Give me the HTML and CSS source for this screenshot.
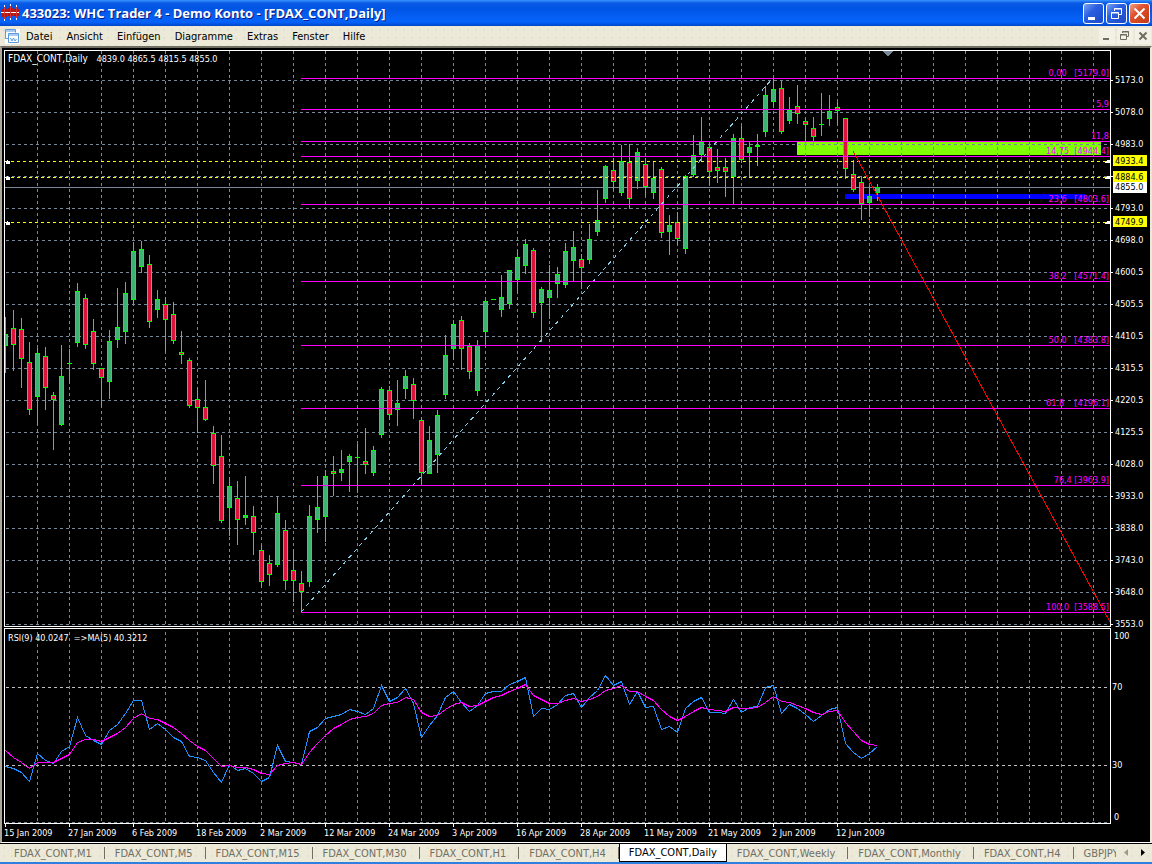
FILE: index.html
```html
<!DOCTYPE html>
<html lang="de">
<head>
    <meta charset="UTF-8">
    <meta name="viewport" content="width=device-width, initial-scale=1.0">
    <title>WHC Trader 4</title>
    <link rel="stylesheet" href="styles.css">
</head>
<body>
    <header class="titlebar">
        <svg class="app-icon" width="18" height="18" viewBox="0 0 18 18">
            <path d="M3.5 1V17M9.5 0V16M15.5 1V16" stroke="#fff" stroke-width="1"/>
            <path d="M1 5h5v8H1zM7 4h5v8H7zM13 5h5v7h-5z" fill="#b01818"/>
            <path d="M0 8.500H18" stroke="#fff" stroke-width="1"/>
            <path d="M3.500 3v12M9.500 2v12M15.500 3v11" stroke="#d83030"/>
        </svg>
        <h1>433023: WHC Trader 4 - Demo Konto - [FDAX_CONT,Daily]</h1>
        <div class="window-buttons">
            <button type="button" aria-label="Minimieren">
                <svg width="19" height="19"><path d="M4 13h7v3H4z" fill="#fff"/></svg>
            </button>
            <button type="button" aria-label="Wiederherstellen">
                <svg width="19" height="19" fill="none" stroke="#fff"><path d="M7.500 7V4.500h7v6H12M7 5h8"/><path d="M4.500 8.500h7v6h-7zM4 9h8"/></svg>
            </button>
            <button type="button" class="close" aria-label="Schließen">
                <svg width="19" height="19"><path d="M4.500 4.500l10 10M14.500 4.500l-10 10" stroke="#fff" stroke-width="2"/></svg>
            </button>
        </div>
    </header>

    <nav class="menubar">
        <svg class="doc-icon" width="15" height="15" viewBox="0 0 15 15" fill="none" stroke="#5a9be0">
            <path d="M3.500 9.500h-3v-9h10v3M1 2h9"/>
            <path d="M3.500 4.500h10v9h-10zM4 6h9" fill="#fff"/>
            <path d="M5.500 9l1.500 3 1.500-3 1.500 3 1.500-2"/>
        </svg>
        <a href="#datei">Datei</a>
        <a href="#ansicht">Ansicht</a>
        <a href="#einfuegen">Einfügen</a>
        <a href="#diagramme">Diagramme</a>
        <a href="#extras">Extras</a>
        <a href="#fenster">Fenster</a>
        <a href="#hilfe">Hilfe</a>
        <div class="doc-buttons">
            <button type="button" aria-label="Diagramm minimieren">
                <svg width="16" height="16"><path d="M4 10h6v2H4z" fill="#6f6d60"/></svg>
            </button>
            <button type="button" aria-label="Diagramm wiederherstellen">
                <svg width="16" height="16" fill="none" stroke="#6f6d60"><path d="M5.500 5V3.500h6v5H10M5 4h7"/><path d="M3.500 6.500h6v5h-6zM3 7h7"/></svg>
            </button>
            <button type="button" aria-label="Diagramm schließen">
                <svg width="16" height="16"><path d="M4.500 4.500l7 7M11.500 4.500l-7 7" stroke="#6f6d60" stroke-width="2"/></svg>
            </button>
        </div>
    </nav>

    <main class="chart-window">
        <div class="pane">
            <svg class="plot" id="pricePlot" height="575"></svg>
            <svg class="axis" id="priceAxis" width="39" height="577"></svg>
        </div>
        <div class="pane">
            <svg class="plot" id="rsiPlot" height="194"></svg>
            <svg class="axis" id="rsiAxis" width="39" height="196"></svg>
        </div>
        <div class="time-axis">
            <span>15 Jan 2009</span>
            <span>27 Jan 2009</span>
            <span>6 Feb 2009</span>
            <span>18 Feb 2009</span>
            <span>2 Mar 2009</span>
            <span>12 Mar 2009</span>
            <span>24 Mar 2009</span>
            <span>3 Apr 2009</span>
            <span>16 Apr 2009</span>
            <span>28 Apr 2009</span>
            <span>11 May 2009</span>
            <span>21 May 2009</span>
            <span>2 Jun 2009</span>
            <span>12 Jun 2009</span>
        </div>
    </main>

    <footer class="tabbar">
        <div class="tabs">
            <button type="button">FDAX_CONT,M1</button>
            <button type="button">FDAX_CONT,M5</button>
            <button type="button">FDAX_CONT,M15</button>
            <button type="button">FDAX_CONT,M30</button>
            <button type="button">FDAX_CONT,H1</button>
            <button type="button">FDAX_CONT,H4</button>
            <button type="button" class="active">FDAX_CONT,Daily</button>
            <button type="button">FDAX_CONT,Weekly</button>
            <button type="button">FDAX_CONT,Monthly</button>
            <button type="button">FDAX_CONT,H4</button>
            <button type="button">GBPJPY</button>
        </div>
        <div class="tab-scroll">
            <button type="button" aria-label="Zurück"><svg width="5" height="8"><path d="M4 0v7L0 3.500z" fill="#9c9a8c"/></svg></button>
            <button type="button" aria-label="Weiter"><svg width="5" height="8"><path d="M0 0v7l4-3.500z" fill="#000"/></svg></button>
        </div>
    </footer>

    <script src="chart.js"></script>
</body>
</html>
```
FILE: styles.css
```css
body {
    margin: 0;
    min-height: 100vh;
    display: flex;
    flex-direction: column;
    box-sizing: border-box;
    border-bottom: 2px solid #2f7fe0;
    background-color: #ece9d8;
    font-family: "DejaVu Sans Condensed", "DejaVu Sans", sans-serif;
    font-stretch: condensed;
    font-size: 11px;
    color: #000;
    overflow-x: hidden;
}

button {
    font: inherit;
    padding: 0;
    margin: 0;
    border: none;
    background: none;
}

svg {
    display: block;
}

/* Title bar */
.titlebar {
    height: 26px;
    display: flex;
    align-items: center;
    padding: 0 2px 0 1px;
    background: linear-gradient(#3a93ff 0, #0a5be4 3px, #0054e3 8px, #0560f5 18px, #0463fb 22px, #0046c8 26px);
}

.titlebar h1 {
    margin: 0 0 0 3px;
    flex: 1;
    font-family: "Open Sans", sans-serif;
    font-stretch: normal;
    font-size: 13px;
    font-weight: bold;
    color: #fff;
    text-shadow: 1px 1px 0 #0a1883;
    white-space: nowrap;
}

.window-buttons {
    display: flex;
    gap: 2px;
}

.window-buttons button {
    width: 21px;
    height: 21px;
    box-sizing: border-box;
    border: 1px solid #fff;
    border-radius: 3px;
    background: linear-gradient(135deg, #7ba4f4, #2a5ee0 40%, #1c49c8);
}

.window-buttons .close {
    background: linear-gradient(135deg, #f0a088, #e0502c 40%, #c03a14);
}

/* Menu */
.menubar {
    height: 20px;
    display: flex;
    align-items: center;
    padding: 0 1px 0 5px;
    background: radial-gradient(circle, #dfe3cd 1px, transparent 1px) 0 0 / 8px 8px, #ece9d8;
}

.doc-icon {
    background-color: #fff;
    margin-right: 6px;
}

.menubar a {
    color: #000;
    text-decoration: none;
    margin-right: 14px;
}

.doc-buttons {
    display: flex;
    gap: 2px;
    margin-left: auto;
}

.doc-buttons button {
    width: 16px;
    height: 16px;
    background-color: #f3f1e6;
}

/* Chart window */
.chart-window {
    flex: 1;
    box-sizing: border-box;
    padding: 2px 0 0 2px;
    background-color: #000;
    border-style: solid;
    border-width: 2px 2px 1px;
    border-color: #716f64 #ece9d8 #fff #aca899;
}

.pane {
    display: flex;
    margin-bottom: 1px;
}

.plot {
    flex: 1;
    min-width: 0;
    border: 1px solid #fff;
}

.axis {
    overflow: visible;
}

.time-axis {
    display: flex;
    overflow: hidden;
    margin-top: -1px;
    height: 17px;
    line-height: 18px;
    font-size: 9px;
    color: #fff;
}

.time-axis span {
    flex: 0 0 64px;
    white-space: nowrap;
    background: linear-gradient(#fff, #fff) 1px 0 / 1px 3px no-repeat;
}

svg text {
    font-size: 9px;
    white-space: pre;
    fill: #fff;
}

svg .symbol {
    font-size: 10px;
}

.grid-v, .grid-h {
    stroke: #778899;
    stroke-dasharray: 3 3;
}

.bid {
    stroke: #778899;
}

.level {
    stroke: #c0c0c0;
    stroke-dasharray: 3 3;
}

.order {
    stroke: #ffff00;
    stroke-dasharray: 3 3;
}

.fib {
    stroke: #ff00ff;
}

svg .fib-label {
    fill: #ff00ff;
    text-anchor: end;
}

.wick {
    stroke: #00ff00;
}

.up {
    fill: #3cb371;
    stroke: #00ff00;
}

.down {
    fill: #dc143c;
    stroke: #00ff00;
}

.zone-green {
    fill: #7fff00;
}

.zone-blue {
    fill: #0000ff;
}

.trend {
    stroke: #87ceeb;
    stroke-dasharray: 4 4;
}

.target {
    stroke: #ff0000;
}

.rsi, .rsi-ma {
    fill: none;
    stroke: #1e90ff;
}

.rsi-ma {
    stroke: #ff00ff;
}

.tick {
    stroke: #fff;
}

.box-yellow {
    fill: #ffff00;
}

.box-white {
    fill: #fff;
}

svg .box-text {
    fill: #000;
}

/* Tabs */
.tabbar {
    height: 19px;
    display: flex;
    box-sizing: border-box;
    border-top: 1px solid #000;
    background: radial-gradient(circle, #dfe3cd 1px, transparent 1px) 0 0 / 8px 8px, #ece9d8;
}

.tabs {
    flex: 1;
    min-width: 0;
    display: flex;
    overflow: hidden;
    padding-left: 4px;
}

.tabs button {
    flex: none;
    padding: 0 13px 0 10px;
    color: #716f64;
    white-space: nowrap;
    background: linear-gradient(#716f64, #716f64) 100% 3px / 1px 12px no-repeat;
}

.tabs .active {
    color: #000;
    background: #fff;
    border: 1px solid #000;
    border-top: none;
    padding: 0 9px;
}

.tabs button:last-child {
    background: none;
}

.tab-scroll {
    display: flex;
    align-items: center;
    gap: 12px;
    padding: 0 6px 0 8px;
}
```
FILE: chart.js
```js
const BAR = 8;          // pixels per bar
const PRICE_TOP = 51;   // chart y of the first pixel row in each pane
const RSI_TOP = 629;

// high, body top, body bottom, low, up (1) or down (0)
const candles = [
    [317,334,346,373,1], [310,328,345,371,0], [318,329,359,388,0], [342,362,410,415,0], [348,353,397,425,1],
    [347,356,388,410,0], [392,395,400,450,0], [345,376,425,426,1], [349,363,364,384,1], [283,291,343,347,1],
    [294,298,345,349,0], [319,331,364,370,0], [368,368,378,407,0], [330,341,382,399,1], [288,327,340,348,1],
    [282,293,332,344,1], [242,251,300,304,1], [241,249,267,273,1], [255,264,322,328,0], [290,299,310,318,1],
    [297,304,320,352,0], [302,314,341,344,0], [331,352,355,364,0], [358,360,406,408,0], [387,399,408,433,0],
    [380,407,420,421,0], [426,433,466,484,0], [435,456,521,523,0], [477,486,508,536,1], [481,498,520,545,0],
    [476,515,518,525,1], [506,516,533,555,0], [545,550,582,587,0], [555,563,575,586,0], [496,513,565,567,1],
    [520,530,581,590,0], [550,570,581,602,0], [571,583,592,612,0], [505,516,582,587,1], [476,507,520,533,1],
    [470,476,517,542,1], [456,471,474,496,0], [450,469,473,481,1], [454,456,462,492,1], [444,457,458,493,1],
    [428,461,465,474,0], [446,450,473,476,1], [387,389,435,438,1], [386,390,415,420,0], [380,403,410,426,1],
    [370,376,389,399,1], [378,384,401,419,0], [417,420,473,485,0], [426,440,474,474,1], [410,415,455,473,1],
    [335,355,395,399,1], [320,324,349,360,1], [316,320,349,370,0], [343,346,372,379,0], [340,345,391,396,1],
    [300,301,332,345,1], [299,299,300,300,1], [275,297,310,317,1], [270,270,304,309,1], [250,257,280,294,1],
    [239,244,266,274,1], [248,250,313,318,0], [287,289,303,342,1], [265,290,298,319,1], [267,274,284,298,1],
    [243,251,285,288,1], [231,247,261,281,1], [254,259,268,289,0], [224,239,260,264,1], [190,220,232,236,1],
    [165,166,199,203,1], [158,170,182,190,0], [145,161,193,196,1], [144,162,199,209,0], [148,152,181,189,1],
    [158,164,187,196,0], [161,178,193,199,1], [167,169,233,238,0], [215,225,232,255,1], [212,222,239,245,0],
    [175,176,249,254,1], [135,155,175,177,1], [117,142,155,162,1], [141,147,172,185,0], [149,167,171,183,0],
    [158,167,172,197,0], [134,138,177,204,1], [126,138,160,163,0], [142,147,153,177,1], [134,145,147,166,1],
    [86,95,132,137,1], [78,89,102,107,1], [81,88,132,134,0], [97,110,121,124,1], [85,106,114,124,0],
    [118,121,125,150,0], [117,128,137,146,0], [93,124,125,136,1], [95,111,119,126,1], [102,107,111,125,0],
    [118,118,169,179,0], [160,174,190,192,0], [176,182,204,220,0], [186,196,203,217,1], [184,187,193,201,1]
];

const rsi = [
    766,768,772,781,753,760,763,751,746,717,735,740,744,730,724,713,700,700,729,723,729,737,741,756,757,760,
    772,782,764,770,768,773,781,777,745,761,762,764,731,727,718,716,714,709,711,714,708,685,701,697,688,703,
    737,725,715,697,691,702,711,705,693,691,691,684,681,677,716,708,709,704,695,693,707,697,690,675,685,681,
    704,691,707,706,729,726,732,708,701,697,712,712,713,699,712,707,706,687,685,713,704,708,714,721,715,709,
    707,743,752,758,753,746
];

const rsiMa = [
    750,757,762,768,762,762,762,758,754,742,739,739,741,737,733,727,718,713,718,719,723,727,733,740,746,750,
    758,766,765,767,767,769,773,774,765,763,762,764,752,743,735,728,724,719,717,716,713,705,703,702,697,699,
    712,716,715,709,704,702,706,705,701,697,695,691,688,684,695,699,703,703,700,698,701,699,696,690,688,685,
    691,691,696,700,709,716,720,716,711,707,709,710,711,707,708,708,707,702,696,701,702,705,708,712,714,711,
    710,722,731,740,744,745
];

const fibs = [
    [78, "0,00   [5179.0]"], [109, "5,9"], [141, "11,8"], [156, "14,75  [4944.4]"], [204, "23,6   [4803.6]"],
    [281, "38.2   [4571.4]"], [345, "50.0   [4383.8]"], [408, "61.8    [4196.1]"], [485, "76,4 [3963.9]"], [612, "100.0  [3588.5]"]
];

const prices = ["5173.0", "5078.0", "4983.0", "4888.0", "4793.0", "4698.0", "4600.5", "4505.5", "4410.5",
    "4315.5", "4220.5", "4125.5", "4028.0", "3933.0", "3838.0", "3743.0", "3648.0", "3553.0"];

const orders = [[161, "4933.4"], [177, "4884.6"], [222, "4749.9"]];

function el(parent, name, attrs, text) {
    const node = document.createElementNS("http://www.w3.org/2000/svg", name);
    for (const key in attrs) node.setAttribute(key, attrs[key]);
    if (text) node.textContent = text;
    parent.appendChild(node);
    return node;
}

function hline(parent, cls, y, x1) {
    el(parent, "line", { class: cls, x1: x1 || 0, x2: "100%", y1: y + 0.5, y2: y + 0.5 });
}

// vertical grid, enough columns for wide windows
function columns(parent, y1, y2) {
    for (let x = 32; x < 4000; x += 32) {
        el(parent, "line", { class: "grid-v", x1: x + 0.5, x2: x + 0.5, y1: y1, y2: y2 });
    }
}

function drawPrice() {
    const svg = document.getElementById("pricePlot");
    const g = el(svg, "g", { transform: "translate(0 " + -PRICE_TOP + ")", "shape-rendering": "crispEdges" });

    el(g, "rect", { class: "zone-green", x: 792, y: 142, width: 304, height: 13 });
    el(g, "rect", { class: "zone-blue", x: 840, y: 194, width: 240, height: 5 });
    columns(g, 51, 626);
    prices.forEach((p, i) => hline(g, "grid-h", 80 + i * 32, 1));
    hline(g, "bid", 187);

    candles.forEach(([high, top, bottom, low, up], i) => {
        const x = i * BAR;
        if (low - high > 1) {
            el(g, "line", { class: "wick", x1: x + 0.5, x2: x + 0.5, y1: high, y2: low });
        }
        if (bottom - top < 2) {
            el(g, "line", { class: "wick", x1: x - 2, x2: x + 3, y1: top + 0.5, y2: top + 0.5 });
        } else {
            el(g, "rect", { class: up ? "up" : "down", x: x - 1.5, y: top + 0.5, width: 4, height: bottom - top - 1 });
        }
    });

    el(g, "line", { class: "trend", x1: 296, y1: 612, x2: 768, y2: 78 });
    fibs.forEach(([y]) => hline(g, "fib", y, 296));
    fibs.forEach(([y, label]) => el(g, "text", { class: "fib-label", x: "100%", y: y - 2, dx: -1 }, label));
    orders.forEach(([y]) => hline(g, "order", y));
    el(g, "line", { class: "target", x1: 848, y1: 151, x2: 1105, y2: 622 });
    el(g, "path", { d: "M877 51h11l-5 5h-1z", fill: "#778899" });

    // order arrows on both edges
    orders.forEach(([y]) => {
        el(g, "path", { d: "M0 " + (y + 0.5) + "l3-2v1h2v3H1z", fill: "#fff" });
        const right = el(g, "svg", { x: "100%", y: y - 2, width: 6, height: 5, overflow: "visible" });
        el(right, "path", { d: "M-5 4v-1l3-3v1h2v3z", fill: "#fff" });
    });

    const title = el(g, "text", { x: 3, y: 62 });
    el(title, "tspan", { class: "symbol" }, "FDAX_CONT,Daily   ");
    el(title, "tspan", {}, "4839.0 4865.5 4815.5 4855.0");
}

function drawPriceAxis() {
    const g = el(document.getElementById("priceAxis"), "g", { transform: "translate(0 -50)" });
    prices.forEach((p, i) => {
        const y = 80 + i * 32;
        el(g, "line", { class: "tick", x1: 0, x2: 2, y1: y + 0.5, y2: y + 0.5 });
        if (p !== "4888.0") el(g, "text", { x: 4, y: y + 3 }, p);
    });
    el(g, "rect", { class: "box-white", x: 2, y: 182, width: 34, height: 11 });
    el(g, "text", { class: "box-text", x: 4, y: 190 }, "4855.0");
    orders.forEach(([y, label]) => {
        el(g, "rect", { class: "box-yellow", x: 2, y: y - 6, width: 34, height: 11 });
        el(g, "text", { class: "box-text", x: 4, y: y + 3 }, label);
    });
}

function drawRsi() {
    const g = el(document.getElementById("rsiPlot"), "g", { transform: "translate(0 " + -RSI_TOP + ")", "shape-rendering": "crispEdges" });
    const points = values => values.map((y, i) => (i * BAR + 0.5) + "," + (y + 0.5)).join(" ");

    columns(g, 632, 822);
    hline(g, "level", 687, 1);
    hline(g, "level", 765, 1);
    hline(g, "grid-h", 822, 1);
    el(g, "polyline", { class: "rsi", points: points(rsi) });
    el(g, "polyline", { class: "rsi-ma", points: points(rsiMa) });
    el(g, "text", { x: 3, y: 641 }, "RSI(9) 40.0247  =>MA(5) 40.3212");

    const axis = el(document.getElementById("rsiAxis"), "g", { transform: "translate(0 -628)" });
    [[639, "100", 3], [690, "70", 1], [768, "30", 1], [820, "0", 3]].forEach(([y, label, x]) => {
        el(axis, "text", { x: x, y: y }, label);
    });
}

drawPrice();
drawPriceAxis();
drawRsi();
```
